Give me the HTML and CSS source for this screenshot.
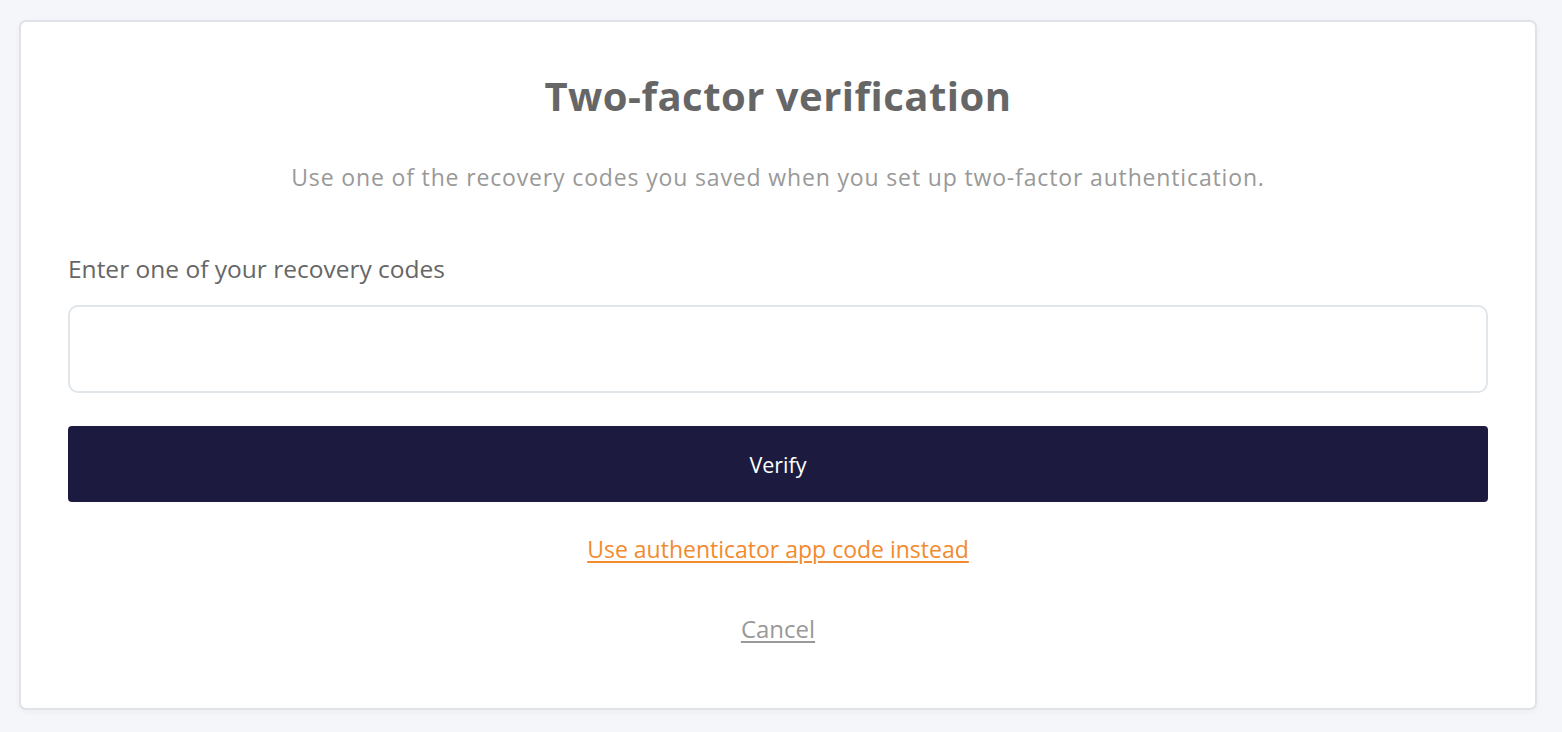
FILE: index.html
```html
<!DOCTYPE html>
<html lang="en">
<head>
    <meta charset="UTF-8">
    <meta name="viewport" content="width=device-width, initial-scale=1.0">
    <title>Two-factor verification</title>
    <link rel="stylesheet" href="styles.css">
</head>
<body>
    <div class="card">
        <h1 class="title">Two-factor verification</h1>
        <p class="subtitle">Use one of the recovery codes you saved when you set up two-factor authentication.</p>

        <form class="verify-form">
            <label class="field-label" for="recoveryCode">Enter one of your recovery codes</label>
            <input type="text" class="code-input" id="recoveryCode" autocomplete="off">
            <button type="submit" class="verify-btn">Verify</button>
        </form>

        <div class="links">
            <a href="#" class="alt-link">Use authenticator app code instead</a>
            <a href="#" class="cancel-link">Cancel</a>
        </div>
    </div>
</body>
</html>
```

FILE: styles.css
```css
* {
    margin: 0;
    padding: 0;
    box-sizing: border-box;
    font-family: 'Open Sans', sans-serif;
}

body {
    background: #f5f6fa;
    min-height: 100vh;
    padding: 20px 25px 20px 19px;
}

.card {
    background: #fff;
    border: 2px solid #e0e2e8;
    border-radius: 7px;
    box-shadow: 0 2px 6px rgba(0, 0, 0, 0.04);
    padding: 50px 47px 64px;
    text-align: center;
}

.title {
    font-size: 40px;
    line-height: 48px;
    font-weight: 700;
    letter-spacing: 0.5px;
    color: #666;
}

.subtitle {
    margin-top: 42px;
    font-size: 23px;
    line-height: 30px;
    letter-spacing: 0.85px;
    color: #999;
}

.verify-form {
    margin-top: 62px;
    display: flex;
    flex-direction: column;
    text-align: left;
}

.field-label {
    font-size: 24.5px;
    line-height: 30px;
    color: #666;
}

.code-input {
    margin-top: 21px;
    height: 88px;
    border: 2px solid #e1e6ea;
    border-radius: 10px;
    padding: 0 20px;
    font-size: 22px;
    outline: none;
}

.verify-btn {
    margin-top: 33px;
    height: 76px;
    border: none;
    border-radius: 4px;
    background: #1c1b3f;
    color: #fff;
    font-size: 21.5px;
    font-weight: 500;
    cursor: pointer;
}

.links {
    display: flex;
    flex-direction: column;
    align-items: center;
    gap: 50px;
    margin-top: 32px;
}

.alt-link {
    font-size: 23px;
    line-height: 30px;
    color: #f18b2f;
    text-decoration-thickness: 2px;
    text-underline-offset: 3px;
}

.cancel-link {
    font-size: 24px;
    line-height: 30px;
    color: #999;
    text-decoration-thickness: 2px;
    text-underline-offset: 3px;
}
```
